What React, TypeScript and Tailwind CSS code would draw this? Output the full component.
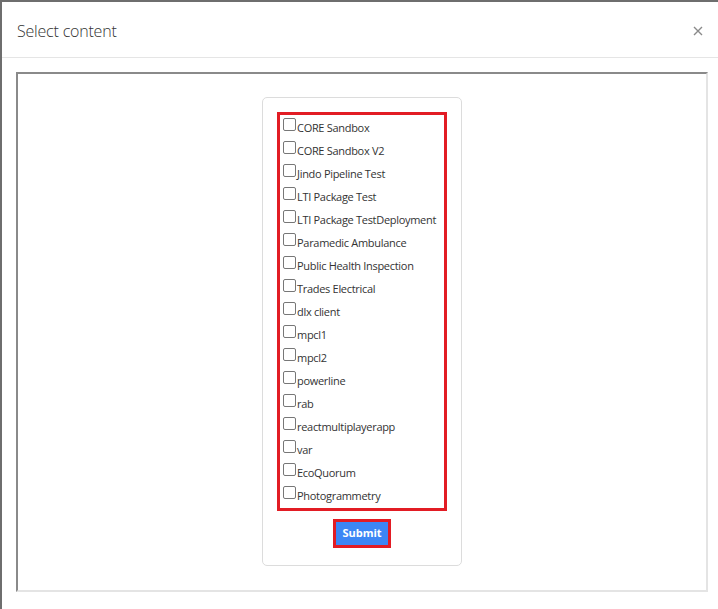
import React from "react";

const items = [
  "CORE Sandbox",
  "CORE Sandbox V2",
  "Jindo Pipeline Test",
  "LTI Package Test",
  "LTI Package TestDeployment",
  "Paramedic Ambulance",
  "Public Health Inspection",
  "Trades Electrical",
  "dlx client",
  "mpcl1",
  "mpcl2",
  "powerline",
  "rab",
  "reactmultiplayerapp",
  "var",
  "EcoQuorum",
  "Photogrammetry",
];

export default function App() {
  return (
    <div
      className="w-[718px] h-[609px] bg-[#6e6e6e] pt-[2px] pl-[2px] overflow-hidden"
      style={{ fontFamily: '"Open Sans", "Noto Sans", sans-serif' }}
    >
      <div className="bg-white h-[620px] w-[716px] flex flex-col">
        <div className="h-[56px] flex items-center justify-between pt-[3px] pl-[15px] pr-[14px] border-b border-[#e5e5e5]">
          <span className="text-[16px] font-light text-[#333] tracking-[-0.2px]">Select content</span>
          <svg width="10" height="10" viewBox="0 0 10 10" className="mr-[1px]">
            <path d="M1 1 L9 9 M9 1 L1 9" stroke="#8a8a8a" strokeWidth="1.4" />
          </svg>
        </div>
        <div className="pt-[14px] pl-[14px] pr-[8px]">
          <div className="w-[692px] h-[520px] border-2 border-t-[#8a8a8a] border-l-[#8a8a8a] border-r-[#e4e4e4] border-b-[#e4e4e4]">
            <div className="pt-[23px] flex justify-center">
              <div className="w-[200px] h-[469px] border border-[#dcdcdc] rounded-[5px] p-[14px] flex flex-col items-center">
                <div className="w-[170px] border-[3px] border-[#e21c24] pl-[3px] pt-[3px]">
                  {items.map((t, i) => (
                    <div
                      key={t}
                      className={`flex items-start ${i === items.length - 1 ? "h-[22px]" : "h-[23px]"}`}
                    >
                      <span className="w-[13px] h-[13px] border border-[#777] rounded-[2px] bg-white shrink-0" />
                      <span className="text-[11px] leading-[15px] text-[#333] pt-[2px] pl-[1px] whitespace-nowrap tracking-[-0.3px]">
                        {t}
                      </span>
                    </div>
                  ))}
                </div>
                <div className="mt-[8px] border-[3px] border-[#e21c24]">
                  <div className="w-[52px] h-[23px] bg-[#3c86f5] text-white text-[11px] font-bold flex items-center justify-center">
                    Submit
                  </div>
                </div>
              </div>
            </div>
          </div>
        </div>
      </div>
    </div>
  );
}
